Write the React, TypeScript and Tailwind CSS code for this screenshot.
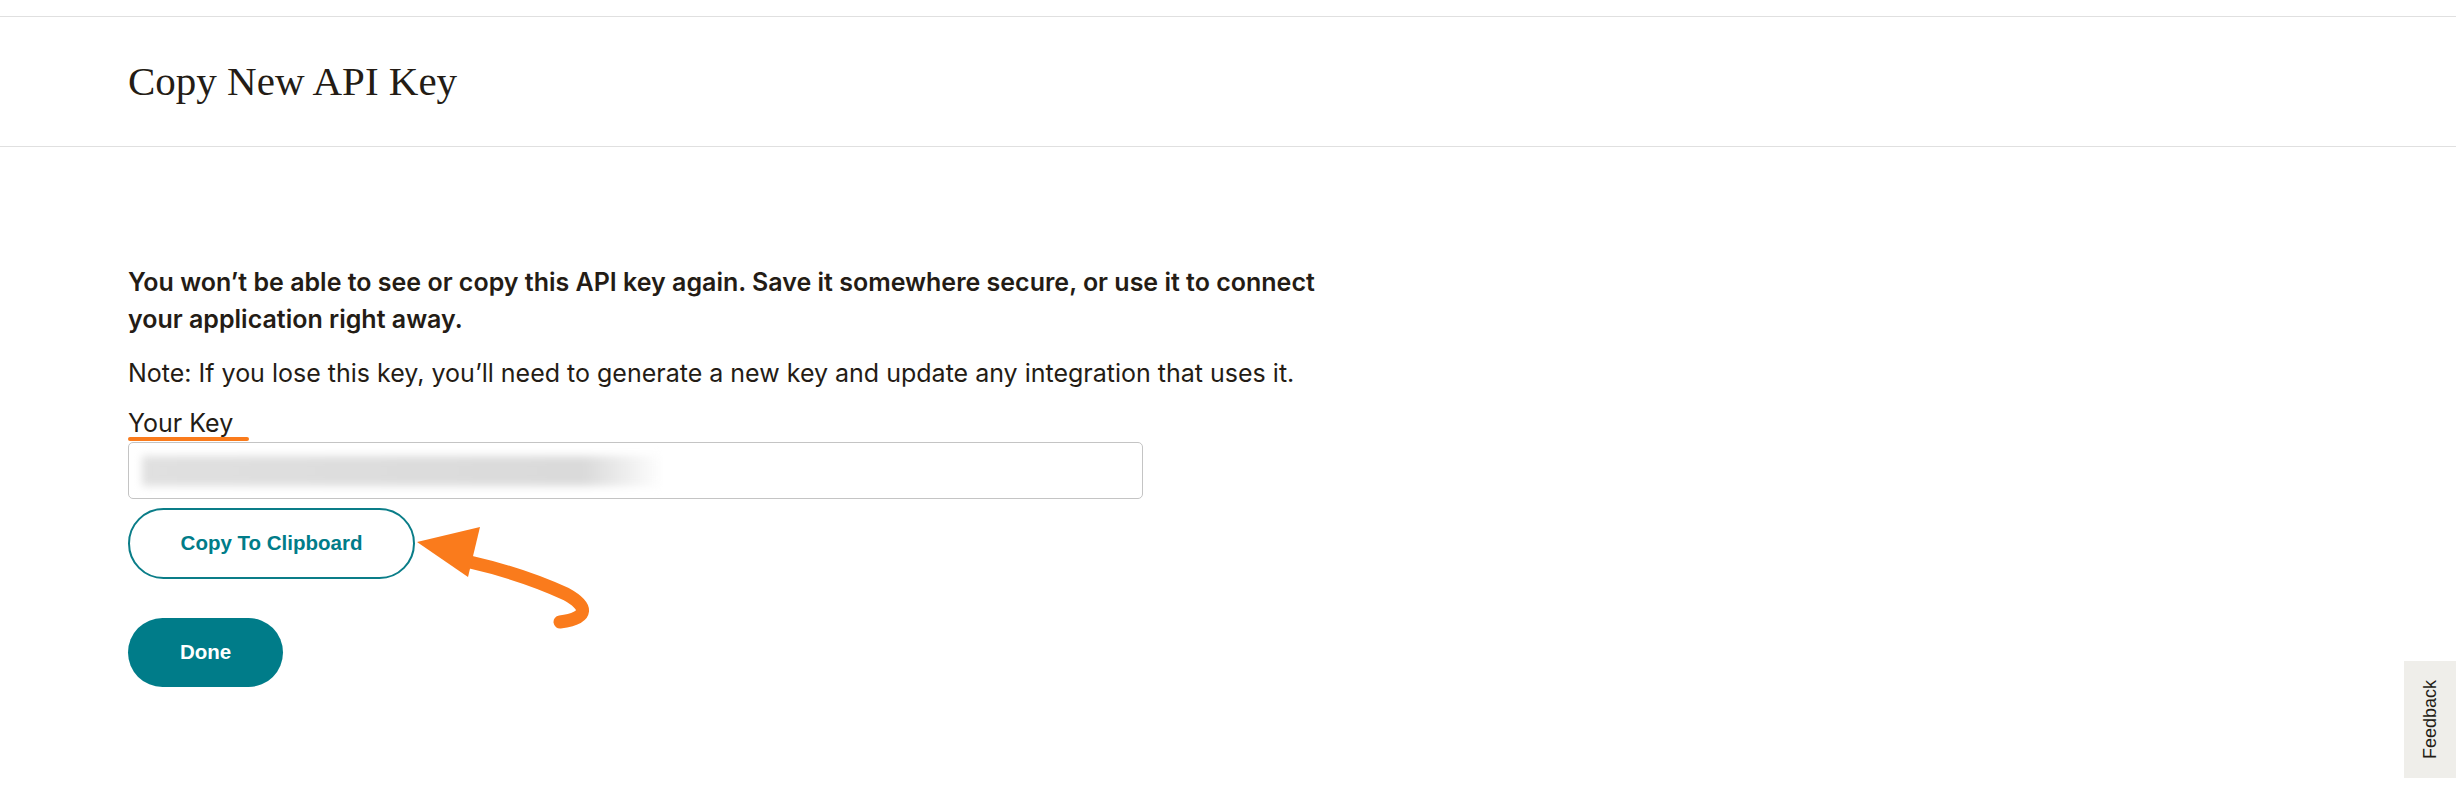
import React from "react";

const body = "font-['Inter','Liberation_Sans',Arial,sans-serif]";
const btn = "font-['Liberation_Sans',Arial,sans-serif]";

function CurvedArrow() {
  return (
    <svg
      className="absolute left-[282px] top-[12px] pointer-events-none"
      width="190"
      height="112"
      viewBox="0 0 190 112"
      fill="none"
    >
      <path
        d="M60 42 C 95 50, 130 62, 156 74 C 178 86, 180 98, 150 102"
        stroke="#fa7b1c"
        strokeWidth="13"
        strokeLinecap="round"
        fill="none"
      />
      <polygon points="7,22 70,7 58,57" fill="#fa7b1c" />
    </svg>
  );
}

export default function App() {
  return (
    <div className={`min-h-screen bg-white text-[#241c15] ${body}`}>
      <div className="mt-4 h-[131px] border-y border-[#e0e0e0] flex items-center pl-[128px]">
        <h1 className="font-['Liberation_Serif',Georgia,serif] text-[41px] leading-none text-[#241c15]">
          Copy New API Key
        </h1>
      </div>

      <div className="pl-[128px] pt-[117px]">
        <p className="max-w-[1220px] text-[25px] leading-[37px] font-semibold">
          You won’t be able to see or copy this API key again. Save it somewhere secure, or use it to connect your
          application right away.
        </p>
        <p className="mt-[17px] text-[25px] leading-[37px]">
          Note: If you lose this key, you’ll need to generate a new key and update any integration that uses it.
        </p>

        <div className="mt-[17px]">
          <div className="text-[25px] leading-[28px]">Your Key</div>
          <div className="h-[4px] w-[121px] rounded-full bg-[#fa7b1c]" />
        </div>

        {/* key value is blurred out */}
        <div className="mt-[1px] h-[57px] w-[1015px] rounded-[5px] border border-[#c4c4c4] flex items-center pl-[13px] overflow-hidden">
          <div className="h-[30px] w-[520px] blur-[4px] bg-gradient-to-r from-[#e0e0e0] via-[#dadada] via-85% to-white" />
        </div>

        <div className="relative mt-[9px]">
          <button className={`h-[71px] w-[287px] rounded-full border-2 border-[#0a7d88] bg-white text-[20.5px] font-bold text-[#007c89] ${btn}`}>
            Copy To Clipboard
          </button>
          <CurvedArrow />
        </div>

        <button className={`mt-[39px] h-[69px] w-[155px] rounded-full bg-[#007c89] text-[20.5px] font-bold text-white ${btn}`}>
          Done
        </button>
      </div>

      <div className="fixed right-0 top-[661px] flex h-[117px] w-[52px] items-center justify-center bg-[#efeeea]">
        <span className={`rotate-180 text-[18px] text-[#241c15] [writing-mode:vertical-rl] ${btn}`}>Feedback</span>
      </div>
    </div>
  );
}
